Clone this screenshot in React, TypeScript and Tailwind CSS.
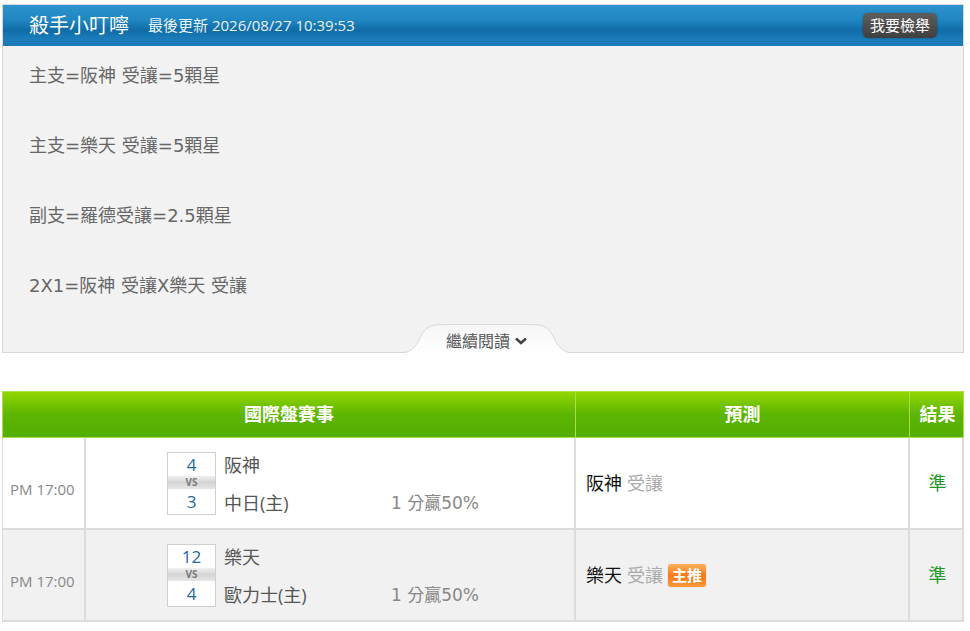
import React from "react";

const font = { fontFamily: '"Open Sans", "Noto Sans CJK TC", sans-serif' };
const wideFont = { fontFamily: '"DejaVu Sans", "Noto Sans CJK TC", sans-serif' };

const tips = [
  "主支=阪神 受讓=5顆星",
  "主支=樂天 受讓=5顆星",
  "副支=羅德受讓=2.5顆星",
  "2X1=阪神 受讓X樂天 受讓",
];

type Game = {
  time: string;
  away: string;
  home: string;
  awayScore: string;
  homeScore: string;
  line: string;
  pick: string;
  hot: boolean;
  result: string;
  bg: string;
};

const games: Game[] = [
  { time: "PM 17:00", away: "阪神", home: "中日(主)", awayScore: "4", homeScore: "3", line: "1 分贏50%", pick: "阪神", hot: false, result: "準", bg: "bg-white" },
  { time: "PM 17:00", away: "樂天", home: "歐力士(主)", awayScore: "12", homeScore: "4", line: "1 分贏50%", pick: "樂天", hot: true, result: "準", bg: "bg-[#f1f1f1]" },
];

function ScoreBox({ a, b }: { a: string; b: string }) {
  return (
    <div className="flex w-[49px] flex-col border border-[#cfcfcf] bg-white">
      <div className="flex h-[23px] items-center justify-center text-[17px] leading-none text-[#1b6aa8]">{a}</div>
      <div className="flex h-[13px] items-center justify-center bg-gradient-to-b from-[#f0f0f0] via-[#d4d4d4] to-[#e6e6e6] text-[10px] font-bold leading-none text-[#7a7a7a]">
        VS
      </div>
      <div className="flex h-[25px] items-center justify-center text-[17px] leading-none text-[#1b6aa8]">{b}</div>
    </div>
  );
}

function ReadMoreTab() {
  return (
    <div className="absolute bottom-[-1px] left-[399px] flex h-[31px] w-[170px] items-center justify-center pt-[6px]">
      <svg width="170" height="31" viewBox="0 0 170 31" className="absolute inset-0">
        <defs>
          <linearGradient id="tabFill" x1="0" y1="0" x2="0" y2="1">
            <stop offset="0" stopColor="#f6f6f6" />
            <stop offset="1" stopColor="#ffffff" />
          </linearGradient>
        </defs>
        <path d="M0 31 C10 31 14 24 18 16 C23 6 27 3 40 3 L130 3 C143 3 147 6 152 16 C156 24 160 31 170 31 Z" fill="url(#tabFill)" />
        <path d="M0 30.5 C10 30.5 14 24 18 16 C23 6 27 2.5 40 2.5 L130 2.5 C143 2.5 147 6 152 16 C156 24 160 30.5 170 30.5" fill="none" stroke="#d9d9d9" strokeWidth="1" />
      </svg>
      <span className="relative text-[16px] leading-none text-[#555555]">繼續閱讀</span>
      <svg width="14" height="10" viewBox="0 0 14 10" className="relative ml-[4px]">
        <path d="M2 2.5 L7 7 L12 2.5" fill="none" stroke="#444" strokeWidth="2.6" />
      </svg>
    </div>
  );
}

export default function App() {
  return (
    <div className="min-h-[631px] w-[970px] bg-white pt-[4px]" style={font}>
      {/* notice panel */}
      <div className="ml-[2px] w-[962px] border border-[#d6d6d6] border-t-[#dcdcdc]">
        <div className="flex h-[41px] items-center bg-[linear-gradient(#2c93cd_0%,#2187c2_35%,#0f6ca6_62%,#1a7bb8_80%,#1b7cb9_100%)] pl-[26px] pr-[26px]">
          <span className="text-[20px] leading-none text-white">殺手小叮嚀</span>
          <span className="ml-[19px] text-[15px] leading-none text-[#e8f2f9]">最後更新 2026/08/27 10:39:53</span>
          <button className="ml-auto flex h-[25px] w-[74px] items-center justify-center rounded-[5px] bg-gradient-to-b from-[#5e5e5e] to-[#3f3f3f] text-[15px] leading-none text-white shadow-[0_0_2px_rgba(0,0,0,0.4)]">
            我要檢舉
          </button>
        </div>
        <div className="relative h-[306px] bg-[#f2f2f2] pl-[26px] pt-[18px]">
          <div className="flex flex-col gap-[46px]" style={wideFont}>
            {tips.map((t) => (
              <div key={t} className="h-[24px] text-[18px] leading-[24px] text-[#666666]">
                {t}
              </div>
            ))}
          </div>
          <ReadMoreTab />
        </div>
      </div>

      {/* games table */}
      <div className="ml-[2px] mt-[38px] w-[962px]">
        <div className="grid h-[47px] grid-cols-[572px_334px_56px] border border-[#a8df4a] bg-gradient-to-b from-[#91d602] via-[#5db503] to-[#52ae02] text-[18px] font-bold text-white">
          <div className="flex items-center justify-center">國際盤賽事</div>
          <div className="flex items-center justify-center border-l border-[#a8df4a]">預測</div>
          <div className="flex items-center justify-center border-l border-[#a8df4a]">結果</div>
        </div>
        {games.map((g, i) => (
          <div
            key={i}
            className={`grid h-[92px] grid-cols-[81px_490px_334px_57px] border-b-2 border-l border-r-2 border-[#dcdcdc] ${g.bg}`}
          >
            <div className="flex items-center pl-[7px] pt-[12px] text-[15px] text-[#888888]">{g.time}</div>
            <div className="flex items-center border-l-2 border-[#dcdcdc] pl-[81px]">
              <ScoreBox a={g.awayScore} b={g.homeScore} />
              <div className="ml-[8px] grid h-[63px] grid-cols-[167px_auto] grid-rows-2 text-[18px] leading-[24px]">
                <span className="self-start pt-[1px] text-[#555555]">{g.away}</span>
                <span />
                <span className="self-end text-[#555555]">{g.home}</span>
                <span className="self-end text-[17px] text-[#888888]" style={wideFont}>
                  {g.line}
                </span>
              </div>
            </div>
            <div className="flex items-center border-l-2 border-[#dcdcdc] pl-[10px] text-[18px]">
              <span className="text-[#111111]">{g.pick}</span>
              <span className="ml-[5px] text-[#aaaaaa]">受讓</span>
              {g.hot && (
                <span className="ml-[5px] flex h-[23px] items-center rounded-[3px] bg-gradient-to-b from-[#ffb15a] via-[#f4791c] to-[#f99838] px-[4px] text-[15px] font-bold leading-none text-white shadow-[0_0_1px_rgba(200,90,0,0.6)]">
                  主推
                </span>
              )}
            </div>
            <div className="flex items-center justify-center border-l-2 border-[#dcdcdc] text-[18px] text-[#1f9a2a]">
              {g.result}
            </div>
          </div>
        ))}
      </div>
    </div>
  );
}
